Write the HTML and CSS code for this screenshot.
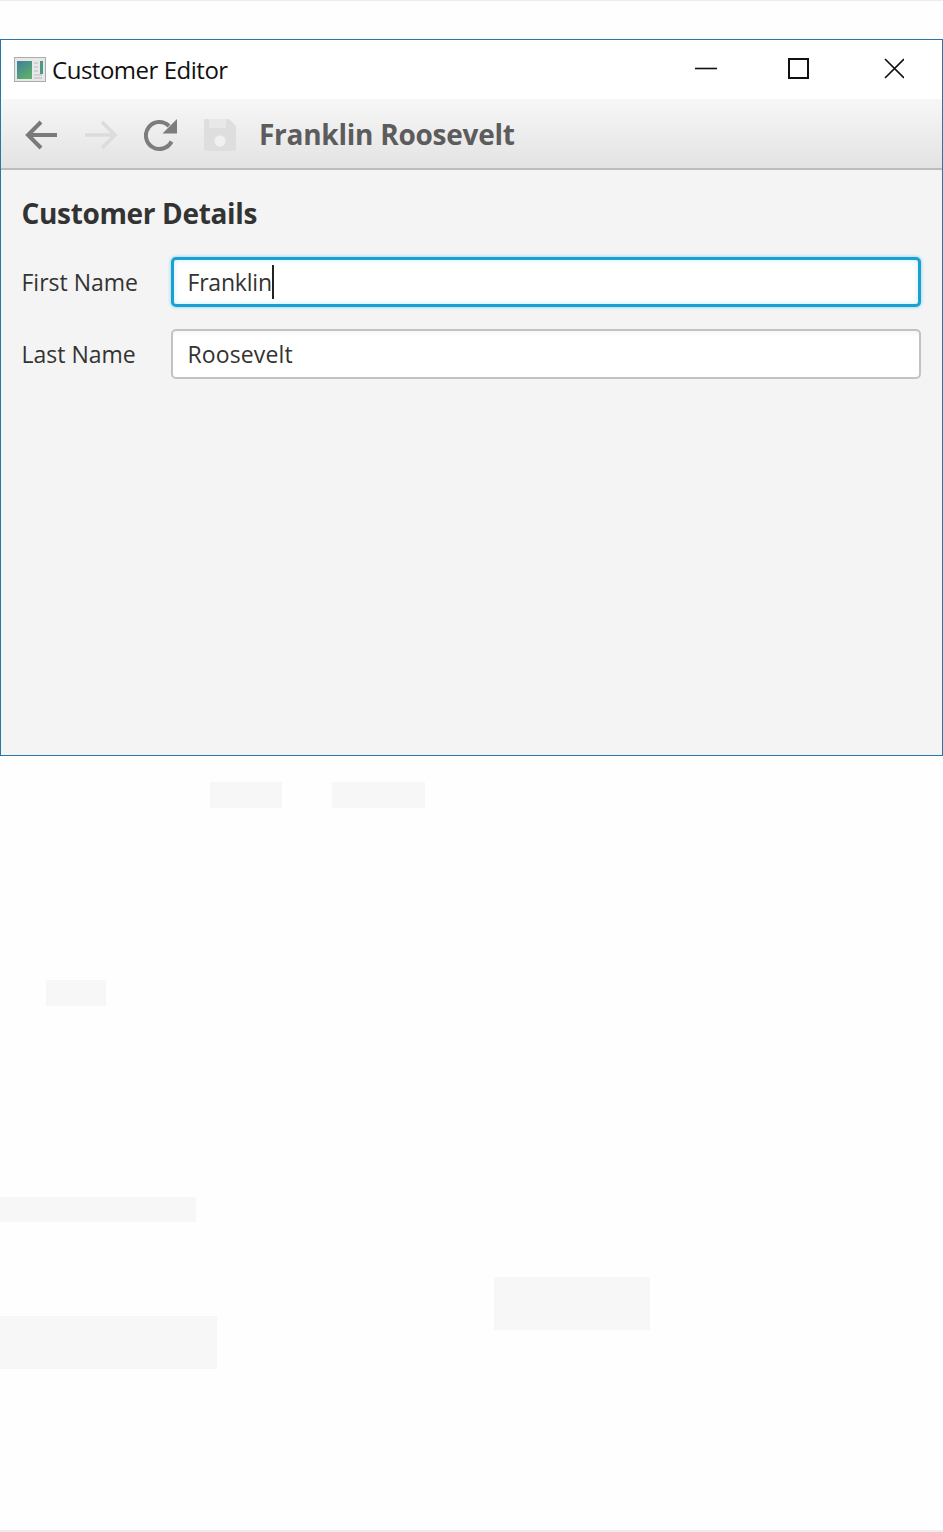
FILE: index.html
```html
<!DOCTYPE html>
<html lang="en">
<head>
<meta charset="utf-8">
<title>Customer Editor</title>
<link rel="stylesheet" href="styles.css">
</head>
<body>
<div class="page">
  <div class="window">
    <header class="titlebar">
      <svg class="app-icon" width="32" height="26" viewBox="0 0 32 26">
        <defs><linearGradient id="g" x1="0" y1="0" x2="0.6" y2="1"><stop offset="0" stop-color="#3f7f9f"/><stop offset="1" stop-color="#5cae6a"/></linearGradient></defs>
        <rect x="0.5" y="0.5" width="31" height="24" fill="#e8e8e8" stroke="#a9adb0"/>
        <rect x="3" y="4" width="15" height="18" fill="url(#g)"/>
        <rect x="26" y="4" width="3" height="13" fill="#4c9a86"/>
        <path d="M20 6h4M20 10h4M20 14h4M20 18h8M20 21h8" stroke="#b5b9bb" stroke-width="1"/>
      </svg>
      <span class="title">Customer Editor</span>
      <div class="controls">
        <svg class="ctl" width="22" height="22" viewBox="0 0 22 22"><path d="M0 10.500h22" stroke="#111" stroke-width="1.6"/></svg>
        <svg class="ctl" width="22" height="22" viewBox="0 0 22 22"><rect x="1" y="1" width="19" height="19" fill="none" stroke="#111" stroke-width="2"/></svg>
        <svg class="ctl" width="22" height="22" viewBox="0 0 22 22"><path d="M3 1l19 19M22 1L3 20" stroke="#111" stroke-width="1.7"/></svg>
      </div>
    </header>
    <div class="toolbar">
      <svg class="tool" width="34" height="34" viewBox="0 0 34 34"><path d="M32 17H3M16 4L3 17l13 13" fill="none" stroke="#7a7a7a" stroke-width="4"/></svg>
      <svg class="tool" width="34" height="34" viewBox="0 0 34 34"><path d="M1 17h29M18 4l13 13-13 13" fill="none" stroke="#dcdcdc" stroke-width="3.500"/></svg>
      <svg class="tool refresh" width="34" height="34" viewBox="0 0 34 34"><path d="M27.500 23.500A13.500 13.500 0 1 1 25 8" fill="none" stroke="#7d7d7d" stroke-width="4"/><path d="M33 1v14.500H18.500z" fill="#7d7d7d"/></svg>
      <svg class="tool" width="34" height="34" viewBox="0 0 34 34"><path d="M3 1h23l7 7v23a2 2 0 0 1-2 2H3a2 2 0 0 1-2-2V3a2 2 0 0 1 2-2z" fill="#dedede"/><rect x="6" y="1" width="17" height="9" fill="#e8e8e8"/><circle cx="17" cy="23" r="5.500" fill="#f1f1f1"/></svg>
      <span class="crumb">Franklin Roosevelt</span>
    </div>
    <main class="content">
      <h1 class="heading">Customer Details</h1>
      <div class="form">
        <label class="label">First Name</label>
        <div class="field focused"><span class="value-first">Franklin</span><i class="caret"></i></div>
        <label class="label">Last Name</label>
        <div class="field"><span class="value-last">Roosevelt</span></div>
      </div>
    </main>
  </div>
  <div class="patch p1"></div>
  <div class="patch p2"></div>
  <div class="patch p3"></div>
  <div class="patch p4"></div>
  <div class="patch p5"></div>
  <div class="patch p6"></div>
</div>
</body>
</html>
```
FILE: styles.css
```css
* { box-sizing: border-box; }
html, body { margin: 0; padding: 0; }
body { background: #fefefe; font-family: "Open Sans", "Noto Sans", sans-serif; overflow: hidden; }
.page {
  position: relative;
  height: 1532px;
  padding-top: 38px;
  border-top: 1px solid #ececec;
  border-bottom: 2px solid #ededed;
}
.window {
  height: 717px;
  border: 1px solid #2a76ab;
  background: #f4f4f4;
  display: flex;
  flex-direction: column;
}
.titlebar {
  height: 59px;
  flex: none;
  background: #fff;
  display: flex;
  align-items: center;
  padding-left: 13px;
}
.app-icon { margin-right: 6px; flex: none; }
.title { font-size: 24px; color: #111; letter-spacing: -0.48px; }
.controls { margin-left: auto; display: flex; gap: 71px; padding-right: 38px; margin-top: -2px; transform: translateX(-1px); }
.ctl:last-child { margin-left: 1px; margin-right: -1px; }
.toolbar {
  height: 71px;
  flex: none;
  background: linear-gradient(#f7f7f7, #e3e3e3);
  border-bottom: 2px solid #bcbcbc;
  display: flex;
  align-items: center;
  padding-left: 24px;
  gap: 25px;
}
.tool { margin-top: 3px; }
.refresh { margin-left: 1px; }
.crumb { font-size: 28px; font-weight: 700; color: #5c5c5c; margin: 1px 0 0 -3px; letter-spacing: -0.26px; }
.content { flex: 1; padding: 24px 21px 0 20.5px; }
.heading { margin: 0 0 25px; font-size: 28px; line-height: 38px; font-weight: 700; color: #333; letter-spacing: -0.34px; }
.form { display: grid; grid-template-columns: 149.500px 1fr; row-gap: 22px; align-items: center; }
.label { font-size: 23px; color: #333; }
.field {
  height: 50px;
  display: flex;
  align-items: center;
  padding-left: 14.500px;
  background: linear-gradient(#f7f7f7, #fff 6px);
  border: 2px solid #c2c2c2;
  border-radius: 5px;
  font-size: 23px;
  color: #333;
}
.value-first { letter-spacing: -0.2px; }
.value-last { letter-spacing: 0.12px; }
.field.focused {
  background: #fff;
  border: 3px solid #1aa0d2;
  box-shadow: 0 0 3px 1px #a9dff0, inset 0 0 5px #c4ebf7;
  padding-left: 13.500px;
}
.caret { width: 2px; height: 34px; background: #222; }
.patch { position: absolute; background: #f7f7f7; }
.p1 { left: 210px; top: 781px; width: 72px; height: 26px; }
.p2 { left: 332px; top: 781px; width: 93px; height: 26px; }
.p3 { left: 46px; top: 979px; width: 60px; height: 26px; }
.p4 { left: 0; top: 1196px; width: 196px; height: 25px; }
.p5 { left: 494px; top: 1276px; width: 156px; height: 53px; }
.p6 { left: 0; top: 1315px; width: 217px; height: 53px; }
```
